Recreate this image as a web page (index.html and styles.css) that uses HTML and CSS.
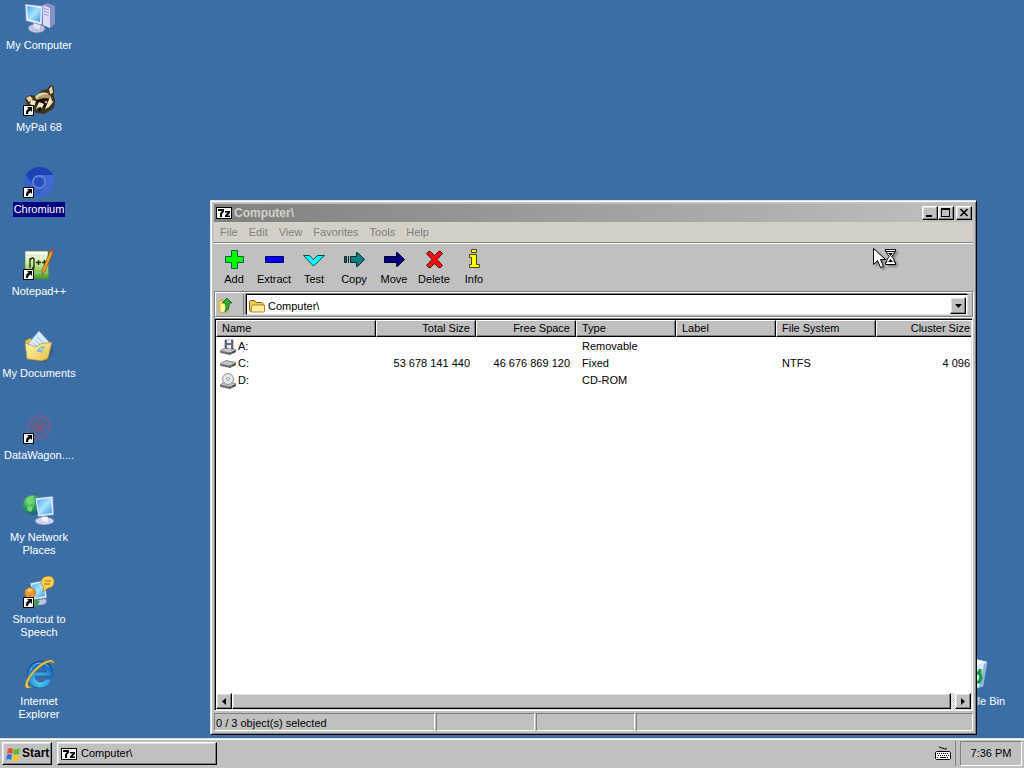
FILE: index.html
```
<!DOCTYPE html>
<html lang="en">
<head>
  <meta charset="UTF-8">
  <meta name="viewport" content="width=device-width, initial-scale=1.0">
  <title>Desktop</title>
  <link rel="stylesheet" href="styles.css">
</head>
<body>
  <!-- Shared icons -->
  <svg class="defs" aria-hidden="true">
    <defs>
      <linearGradient id="screen" x1="0" y1="0" x2="1" y2="1">
        <stop offset="0" stop-color="#4aa8f0"/>
        <stop offset="0.5" stop-color="#a8e4fc"/>
        <stop offset="1" stop-color="#3c94e4"/>
      </linearGradient>
      <linearGradient id="paper" x1="0" y1="0" x2="0" y2="1">
        <stop offset="0.1" stop-color="#fbfff4"/>
        <stop offset="0.55" stop-color="#b8e080"/>
        <stop offset="1" stop-color="#3c9c20"/>
      </linearGradient>
      <linearGradient id="folder" x1="0" y1="0" x2="1" y2="1">
        <stop offset="0" stop-color="#fff6b8"/>
        <stop offset="1" stop-color="#e8c040"/>
      </linearGradient>
      <radialGradient id="globe" cx="0.35" cy="0.3" r="0.8">
        <stop offset="0" stop-color="#90e890"/>
        <stop offset="0.5" stop-color="#28a048"/>
        <stop offset="1" stop-color="#1448a0"/>
      </radialGradient>
      <radialGradient id="ie" cx="0.5" cy="0.75" r="0.75">
        <stop offset="0" stop-color="#58d4f4"/>
        <stop offset="0.6" stop-color="#2888d4"/>
        <stop offset="1" stop-color="#0c50a4"/>
      </radialGradient>
    </defs>
    <symbol id="shortcut" viewBox="0 0 11 11">
      <path fill="#fff" stroke="#000" d="M.5.5h10v10H.5z"/>
      <path d="M4 2h5v5L7.600 5.600Q5 6.500 5 9H3Q2.500 5.500 5.600 3.600z"/>
    </symbol>
    <symbol id="sevenzip" viewBox="0 0 16 12">
      <path d="M0 0h16v12H0z"/>
      <path fill="#fff" d="M1 1h14v10H1z"/>
      <path d="M2 2h6v2.500L6 7v3H4V6.500L6 4H2zM9 4h5v2l-2.500 2.500H14V10H9V8.500L11.500 5.500H9z"/>
    </symbol>
    <symbol id="drive" viewBox="0 0 16 8">
      <path fill="#c8c8c8" stroke="#666" stroke-width=".7" d="M.5 3.500L6 .5l9.500 2v2.500L10 7.600.5 5.500z"/>
      <path fill="#707070" d="M.5 3.800L10 5.600v2L.5 5.700z"/>
      <path fill="#444" d="M10 5.600l5.500-2.500v2L10 7.600z"/>
      <path fill="#60d060" d="M11 5.500h1.500v1H11z"/>
    </symbol>
  </svg>

  <main class="desktop">
    <div class="icons">
      <a class="shortcut" href="#">
        <svg width="32" height="32" viewBox="0 0 32 32">
          <path fill="#8890c8" d="M20 3l5-2 7 3v18l-5 4-7-3z"/>
          <path fill="#dcdcf4" d="M20 3l7 3v20l-7-3z"/>
          <path stroke="#9aa0cc" d="M21 6l5 2M21 9l5 2M21 12l5 2"/>
          <path fill="#c0c4e4" stroke="#7078b0" stroke-width=".6" d="M5 26q1-4 9-4 8 1 8 4.500T14 31q-8-.5-9-5z"/>
          <path fill="#e4e4f8" d="M10 20l7 1v6l-6-1z"/>
          <path fill="#eceef8" stroke="#6670ac" stroke-width=".7" d="M2 2l18 2-1 19-16-4z"/>
          <path fill="url(#screen)" d="M4 4l14 2-1 14-12-3z"/>
        </svg>
        <span>My Computer</span>
      </a>
      <a class="shortcut" href="#">
        <svg width="32" height="32" viewBox="0 0 32 32">
          <path fill="#40341c" d="M2 14l5-3 6 1 6-6 5-1 4-4 3 2v10l2 5-3 7-9 5-8-1-9-8z"/>
          <path fill="#e8d4a8" d="M3 14l4-2 3 3-4 3zM26 5l3-3 1 7-3 1zM12 13q6-7 14-3l-4 2q-5-1-8 4z"/>
          <path fill="#b49868" d="M14 14q6-5 13-3l2 4q-9-3-13 3z"/>
          <path fill="#140e08" d="M13 17q6-5 14-1l-1 6q-5 3-11 1z"/>
          <path fill="#f4e8c8" d="M27 13l3 5-4 5-4 2zM8 16l5 1-2 5-4-2zM16 18l5 2-3 6-5-1z"/>
          <circle cx="23" cy="18" r="1.300" fill="#e0a848"/>
          <path fill="#111" d="M14 24l4-1 1 3-3 2z"/>
          <use href="#shortcut" x="0" y="21" width="11" height="11"/>
        </svg>
        <span>MyPal 68</span>
      </a>
      <a class="shortcut selected" href="#">
        <svg width="32" height="32" viewBox="0 0 32 32">
          <circle cx="16" cy="16" r="15" fill="#3460cc"/>
          <path fill="#1c42b4" d="M3 9Q8 1 16 1q10 0 14 8H16q-6 0-7 8z"/>
          <path fill="#4068d0" d="M16 9h14q4 11-5 19l-9 3 7-12q1-6-7-10z"/>
          <circle cx="16" cy="16" r="7" fill="#6484d8"/>
          <circle cx="16" cy="16" r="5.300" fill="#2450c0"/>
          <use href="#shortcut" x="0" y="21" width="11" height="11"/>
        </svg>
        <span>Chromium</span>
      </a>
      <a class="shortcut" href="#">
        <svg width="32" height="32" viewBox="0 0 32 32">
          <path fill="url(#paper)" stroke="#507850" stroke-width=".6" d="M2 3h23l1 28H2z"/>
          <path stroke="#607060" stroke-width="1.500" stroke-dasharray="1.500 1.500" d="M3 2.500h22"/>
          <path stroke="#b8ccb8" stroke-width=".6" d="M3 7h22M3 21h22M3 25h22"/>
          <path fill="none" stroke="#102808" stroke-width="1.300" d="M7 20V11h1l1-1h1l1 1v9H9M13 14.500h5m-2.500-2.500v5M19 14.500h5m-2.500-2.500v5"/>
          <path fill="#e8a030" stroke="#704010" stroke-width=".6" d="M28 1l3 2-9 20-3 4v-5z"/>
          <path fill="#c05050" d="M28 1l3 2-1 2.500-3-2z"/>
          <use href="#shortcut" x="0" y="21" width="11" height="11"/>
        </svg>
        <span>Notepad++</span>
      </a>
      <a class="shortcut" href="#">
        <svg width="32" height="32" viewBox="0 0 32 32">
          <path fill="#324c70" opacity=".5" d="M5 30l18 2 7-9v-8l-5 14z"/>
          <path fill="#e8c048" stroke="#907020" stroke-width=".6" d="M2 11l5-3 6 4 12 2-1 16-20-1z"/>
          <path fill="#d8ecff" stroke="#78a8e0" stroke-width=".7" d="M5 14L16 1l11 12-9 12z"/>
          <path stroke="#90bcf0" d="M12 10l9 8M14 7l9 8M10 13l8 7"/>
          <path fill="url(#folder)" stroke="#a08028" stroke-width=".6" d="M2 13l11 4 4-3 12-2-4 16-6 3-15-2z"/>
          <path fill="none" stroke="#78bcd8" stroke-width="1.300" d="M14 22q3-6 7-5-2 4-6 4l5 1"/>
        </svg>
        <span>My Documents</span>
      </a>
      <a class="shortcut" href="#">
        <svg width="32" height="32" viewBox="0 0 32 32" opacity=".8">
          <g fill="none" stroke="#865c8c">
            <circle cx="16" cy="15" r="11" stroke-width="2.500" stroke-dasharray="3 1"/>
            <circle cx="16" cy="15" r="5" stroke="#94506c" stroke-width="2"/>
            <path stroke="#945070" d="M16 3v24M4 15h24M8 7l16 16M24 7L8 23"/>
          </g>
        </svg>
        <svg class="overlay" width="11" height="11"><use href="#shortcut" width="11" height="11"/></svg>
        <span>DataWagon....</span>
      </a>
      <a class="shortcut" href="#">
        <svg width="32" height="32" viewBox="0 0 32 32">
          <circle cx="10" cy="11" r="10" fill="url(#globe)"/>
          <path fill="#70d870" d="M3 5q4-4 8-3l-2 5-4 3zM5 12l5 1-2 5-4-2z"/>
          <path fill="#d0d4ec" stroke="#7078b0" stroke-width=".6" d="M12 27q1-4 10-4 9 1 9 4t-10 4q-8-.5-9-4z"/>
          <path fill="#f0f0fc" d="M18 21l7 2v5l-6-1z"/>
          <path fill="#e0e8fa" stroke="#5068ac" stroke-width=".7" d="M12 4l18-2 1 19-16 2z"/>
          <path fill="url(#screen)" d="M14 6l14-2 1 15-13 2z"/>
        </svg>
        <span>My Network Places</span>
      </a>
      <a class="shortcut" href="#">
        <svg width="32" height="32" viewBox="0 0 32 32">
          <path fill="#c8c4e8" stroke="#686898" stroke-width=".6" d="M12 26q4-4 11-3 2 3-1 5t-10 1z"/>
          <path fill="#dceaf8" stroke="#486898" stroke-width=".7" d="M7 7l15-3 2 18-13 2z"/>
          <path fill="url(#screen)" d="M9 9l11-3 2 14-10 2z"/>
          <path fill="#3c9c50" d="M10 23l7 2-3 5H6z"/>
          <circle cx="7" cy="17" r="5.500" fill="#e89838" stroke="#905010" stroke-width=".6"/>
          <path fill="#f8c868" d="M3 15q3-5 7-1l-3 2z"/>
          <path fill="#fcd050" stroke="#a87818" stroke-width=".7" d="M18 6q1-6 8-6 6 1 5 7-1 5-6 5l-5 4 1-5q-3-2-3-5z"/>
          <path stroke="#a07010" d="M22 5h6M21 8h6"/>
          <use href="#shortcut" x="0" y="21" width="11" height="11"/>
        </svg>
        <span>Shortcut to Speech</span>
      </a>
      <a class="shortcut" href="#">
        <svg width="32" height="32" viewBox="0 0 32 32">
          <path fill="url(#ie)" stroke="#0c4488" stroke-width=".5" fill-rule="evenodd" d="M17 3q12 0 13 12l-.5 3H12q1 6 6 6 3 0 5-3h6q-3 9-12 9Q4 29 4 16.500 5 4 17 3zM12 14h11q-1-5-5.500-5T12 14z"/>
          <path fill="none" stroke="#90dcf8" stroke-width=".8" d="M7 13q3-8 10-8 6 0 9 4"/>
          <path fill="#ecc040" stroke="#a88020" stroke-width=".3" d="M31 7q1-5-4-5-8 1-15 9Q3 20 2 27q0 5 7 2-5 0-4-4 2-7 9-13 7-7 13-8 4 0 4 3z"/>
        </svg>
        <span>Internet Explorer</span>
      </a>
    </div>

    <a class="shortcut recycle" href="#">
      <svg width="32" height="32" viewBox="0 0 32 32">
        <path fill="#d4ecf4" stroke="#7cacc8" stroke-width=".7" d="M3 4l12-3 12 3-4 24-8 3-8-4z"/>
        <path fill="#f4fcff" d="M3 4l12-3 12 3-10 3z"/>
        <path fill="#8cb8d8" d="M24 6l3-2-4 23-4 2z"/>
        <path fill="none" stroke="#18983c" stroke-width="3" d="M12 20l4-6 4 2 1 4-2 4h-6M20 11v4h-4"/>
      </svg>
      <span>Recycle Bin</span>
    </a>

    <section class="window">
      <header class="titlebar">
        <svg width="16" height="12"><use href="#sevenzip"/></svg>
        <h1>Computer\</h1>
        <button class="winbtn" aria-label="Minimize"><svg width="12" height="10"><path d="M2 7h6v2H2z"/></svg></button>
        <button class="winbtn" aria-label="Maximize"><svg width="12" height="10"><path d="M1 0h9v9H1zM2 2v6h7V2z" fill-rule="evenodd"/></svg></button>
        <button class="winbtn close" aria-label="Close"><svg width="12" height="10"><path fill="none" stroke="#000" stroke-width="1.600" d="M2.500 1l7 7M9.500 1l-7 7"/></svg></button>
      </header>

      <nav class="menu">
        <button>File</button>
        <button>Edit</button>
        <button>View</button>
        <button>Favorites</button>
        <button>Tools</button>
        <button>Help</button>
      </nav>

      <div class="toolbar">
        <button>
          <svg width="24" height="24"><path fill="#0f0" stroke="#063" d="M9.500 3.500h6v6h6v6h-6v6h-6v-6h-6v-6h6z"/></svg>
          Add
        </button>
        <button>
          <svg width="24" height="24"><path fill="#00f" stroke="#000060" d="M3.500 9.500h18v6h-18z"/></svg>
          Extract
        </button>
        <button>
          <svg width="24" height="24"><path fill="#0ff" stroke="#064848" d="M1.500 8.500h6l4 4 4-4h7L11.500 19z"/></svg>
          Test
        </button>
        <button>
          <svg width="24" height="24"><path fill="#088080" stroke="#022" d="M2.500 9.500h2v6h-2zM8.500 9.500h6v-4h1l7 7-7 7h-1v-4h-6z"/><path stroke="#022" d="M6.500 9v7"/></svg>
          Copy
        </button>
        <button>
          <svg width="24" height="24"><path fill="#000080" stroke="#000030" d="M2.500 9.500h12v-4h1l7 7-7 7h-1v-4h-12z"/></svg>
          Move
        </button>
        <button>
          <svg width="24" height="24"><path fill="#f01010" stroke="#500" d="M4.500 6.500l2-2h2l4 4 4-4h2l2 2-5.500 6 5.500 6-2 2h-2l-4-4-4 4h-2l-2-2 5.500-6z"/></svg>
          Delete
        </button>
        <button>
          <svg width="24" height="24"><path fill="#ff0" stroke="#440" d="M9.500 2.500h5v3h-5zM7.500 7.500h7v10h3v3h-10v-3h2v-7h-2z"/></svg>
          Info
        </button>
      </div>

      <div class="address">
        <button class="up" aria-label="Up one level">
          <svg width="16" height="16">
            <path fill="#f4e060" stroke="#b09828" stroke-width=".7" d="M1 4l4-1 2 2h3v10l-7 .5-2-2z"/>
            <path fill="#fff8a0" d="M3 7l6-1-1 8-5 1z"/>
            <path fill="#28b030" stroke="#085010" stroke-width=".7" d="M4 6l5-5 5 5h-3q1 6-4 9 2-5 0-9z"/>
          </svg>
        </button>
        <div class="combo">
          <svg width="16" height="14">
            <path fill="#f0d050" stroke="#806010" d="M.5 11V2.500l1-1h4l1.500 2h6l1 1v7l-1 1H1.500z"/>
            <path fill="#fff098" stroke="#907020" stroke-width=".8" d="M2 13l1-7h12.500v6.500l-1 .5z"/>
          </svg>
          <input type="text" aria-label="Path" value="Computer\">
          <button class="drop" aria-label="Show folders"><svg width="7" height="4"><path d="M0 0h7L3.500 4z"/></svg></button>
        </div>
      </div>

      <div class="list">
        <div class="rows">
          <table>
            <thead>
              <tr>
                <th class="name">Name</th>
                <th class="num">Total Size</th>
                <th class="num">Free Space</th>
                <th>Type</th>
                <th>Label</th>
                <th>File System</th>
                <th class="num">Cluster Size</th>
              </tr>
            </thead>
            <tbody>
              <tr>
                <td class="name"><svg width="16" height="16"><use href="#drive" y="8" width="16" height="8"/><path fill="#687080" stroke="#404858" stroke-width=".6" d="M5 1h8v9l-8-1z"/><path fill="#e8ecf4" d="M7 1h4v3H7zM7 6h4v4L7 9z"/></svg>A:</td>
                <td></td><td></td><td>Removable</td><td></td><td></td><td></td>
              </tr>
              <tr>
                <td class="name"><svg width="16" height="16"><use href="#drive" y="4" width="16" height="8"/></svg>C:</td>
                <td class="num">53 678 141 440</td><td class="num">46 676 869 120</td><td>Fixed</td><td></td><td>NTFS</td><td class="num">4 096</td>
              </tr>
              <tr>
                <td class="name"><svg width="16" height="16"><use href="#drive" y="8" width="16" height="8"/><circle cx="8" cy="6" r="5.500" fill="#e4e8ec" stroke="#777" stroke-width=".8"/><circle cx="8" cy="6" r="1.500" fill="#fff" stroke="#777" stroke-width=".7"/></svg>D:</td>
                <td></td><td></td><td>CD-ROM</td><td></td><td></td><td></td>
              </tr>
            </tbody>
          </table>
        </div>
        <div class="scrollbar">
          <button aria-label="Scroll left"><svg width="4" height="7"><path d="M4 0v7L0 3.500z"/></svg></button>
          <div class="thumb"></div>
          <button aria-label="Scroll right"><svg width="4" height="7"><path d="M0 0v7l4-3.500z"/></svg></button>
        </div>
      </div>

      <footer class="status">
        <div class="first">0 / 3 object(s) selected</div>
        <div></div>
        <div></div>
        <div class="last"></div>
      </footer>
    </section>

    <!-- Busy pointer -->
    <svg class="pointer" width="26" height="23">
      <path fill="#fff" stroke="#000" d="M1.500 1.500v16l4-4 3 7 3-1-3-7h5z"/>
      <path fill="#fff" stroke="#000" d="M13.500 2.500h10v2h-1q0 3-3 5 3 2 3 6h1v2h-10v-2h1q0-4 3-6-3-2-3-5h-1z"/>
      <path d="M16 6h5l-2.500 3zM16 15l2.500-3 2.500 3zM14 4h9v1h-9z"/>
    </svg>
  </main>

  <footer class="taskbar">
    <button class="start">
      <svg width="16" height="16">
        <path fill="#e85020" d="M3 3q3-2 5 0L7 8Q4 6 2 8z"/>
        <path fill="#60b830" d="M9 3q3 1 6-1l-1 6q-3 1-6 0z"/>
        <path fill="#3870e0" d="M2 9q2-2 5 0l-1 5q-3-2-5 0z"/>
        <path fill="#f8c818" d="M8 9q3 1 6 0l-1 5q-3 2-6 0z"/>
      </svg>
      Start
    </button>
    <button class="task"><svg width="16" height="12"><use href="#sevenzip"/></svg>Computer\</button>
    <div class="tray">
      <svg width="16" height="14">
        <path fill="none" stroke="#000" d="M4 1h1l1 1h2l1 1h2l1-1M2.500 5.500h12l1 1v6l-1 1h-13l-1-1v-6l1-1z"/>
        <path fill="#fff" d="M1 6h14v7H1z"/>
        <path stroke="#000" stroke-dasharray="1 1" d="M2 7.500h12M3 9.500h11M2 11.500h2M12 11.500h2"/>
        <path stroke="#000" d="M5 11.500h6"/>
      </svg>
      <time>7:36 PM</time>
    </div>
  </footer>
</body>
</html>
```
FILE: styles.css
```
* {
  box-sizing: border-box;
}

body {
  margin: 0;
  height: 100vh;
  display: flex;
  flex-direction: column;
  overflow: hidden;
  background: #3a6ea5;
  color: #000;
  font: 11px/13px "Liberation Sans", Arial, sans-serif;
  cursor: default;
}

button, input {
  margin: 0;
  padding: 0;
  border: 0;
  background: none;
  color: inherit;
  font: inherit;
}

svg {
  display: block;
  flex: none;
}

.defs {
  position: absolute;
  width: 0;
  height: 0;
}

/* Desktop */
.desktop {
  position: relative;
  flex: 1;
  min-height: 0;
}

.icons {
  display: flex;
  flex-direction: column;
  width: 78px;
  padding-top: 2px;
}

.shortcut {
  position: relative;
  display: flex;
  flex-direction: column;
  align-items: center;
  gap: 4px;
  width: 78px;
  height: 82px;
  color: #fff;
  text-align: center;
  text-decoration: none;
}

.shortcut span {
  padding: 1px;
}

.shortcut.selected span {
  background: #000080;
}

.overlay {
  position: absolute;
  left: 23px;
  top: 21px;
}

.recycle {
  position: absolute;
  right: 9px;
  bottom: -2px;
}

/* Window */
.window {
  position: absolute;
  left: 210px;
  right: 47px;
  top: 200px;
  bottom: 3px;
  display: flex;
  flex-direction: column;
  padding: 3px;
  background: #c0c0c0;
  border: 1px solid;
  border-color: #dfdfdf #000 #000 #dfdfdf;
  box-shadow: inset 1px 1px #fff, inset -1px -1px #808080;
}

.titlebar {
  display: flex;
  align-items: center;
  height: 18px;
  padding: 0 1px 0 2px;
  background: linear-gradient(to right, #808080, #c0c0c0);
}

.titlebar h1 {
  flex: 1;
  margin: 0;
  padding-left: 2px;
  color: #d4d0c8;
  font-size: 12px;
  line-height: 14px;
}

.winbtn, .drop, .scrollbar button, .thumb, .start, .task {
  background: #c0c0c0;
  border: 1px solid;
  border-color: #fff #000 #000 #fff;
  box-shadow: inset -1px -1px #808080, inset 1px 1px #dfdfdf;
}

.winbtn {
  width: 16px;
  height: 14px;
  padding: 1px;
}

.winbtn.close {
  margin-left: 2px;
}

.menu {
  display: flex;
  gap: 1px;
  height: 20px;
  padding-left: 1px;
  background: #d4d0c8;
}

.menu button {
  padding: 0 5px;
  color: #808080;
}

.toolbar {
  display: flex;
  height: 49px;
  padding-top: 4px;
  border-top: 1px solid #808080;
  box-shadow: inset 0 1px #fff;
}

.toolbar button {
  display: flex;
  flex-direction: column;
  align-items: center;
  width: 40px;
  height: 39px;
  gap: 2px;
}

.address {
  display: flex;
  height: 26px;
  margin-bottom: 1px;
  padding: 2px 4px 1px 3px;
  border: 1px solid #808080;
  box-shadow: inset 1px 1px #fff, 1px 1px #fff;
}

.up {
  display: flex;
  align-items: center;
  width: 26px;
  margin-right: 2px;
  border-right: 1px solid #808080;
}

.combo {
  display: flex;
  align-items: center;
  flex: 1;
  padding: 2px 1px 0 2px;
  background: #fff;
  border: 1px solid;
  border-color: #000 #dfdfdf #dfdfdf #000;
  box-shadow: -1px -1px #808080;
}

.combo input {
  flex: 1;
  min-width: 0;
  padding: 1px 0 0 3px;
  outline: 0;
}

.drop {
  display: flex;
  align-items: center;
  justify-content: center;
  width: 16px;
  height: 17px;
}

/* File list */
.list {
  display: flex;
  flex-direction: column;
  flex: 1;
  min-height: 0;
  padding: 1px;
  background: #fff;
  border: 1px solid;
  border-color: #808080 #fff #fff #808080;
  box-shadow: inset 1px 1px #000, inset -1px -1px #dfdfdf;
}

.rows {
  flex: 1;
  overflow: hidden;
}

table {
  width: 760px;
  table-layout: fixed;
  border-collapse: separate;
  border-spacing: 0;
}

th, td {
  width: 100px;
  height: 17px;
  padding: 2px 6px 0;
  font-weight: normal;
  text-align: left;
  white-space: nowrap;
}

th {
  padding: 0 5px;
  background: #c0c0c0;
  border: 1px solid;
  border-color: #fff #000 #000 #fff;
  box-shadow: inset -1px -1px #808080;
}

.name {
  width: 160px;
}

td.name {
  display: flex;
  align-items: center;
  gap: 2px;
  padding-left: 4px;
}

.num {
  text-align: right;
}

.scrollbar {
  display: flex;
  height: 16px;
  background: repeating-conic-gradient(#fff 0 25%, #c0c0c0 0 50%) 0 0 / 2px 2px;
}

.scrollbar button {
  display: flex;
  align-items: center;
  justify-content: center;
  width: 16px;
}

.thumb {
  flex: 1;
  margin-right: 4px;
}

/* Status bar */
.status {
  display: flex;
  gap: 1px;
  height: 20px;
  padding-top: 2px;
}

.status div {
  width: 99px;
  padding: 3px 1px 0;
  border: 1px solid;
  border-color: #808080 #fff #fff #808080;
}

.status .first {
  width: 221px;
}

.status .last {
  flex: 1;
}

/* Mouse pointer */
.pointer {
  position: absolute;
  left: 872px;
  top: 247px;
  filter: drop-shadow(2px 2px 1px rgba(0, 0, 0, 0.3));
}

/* Taskbar */
.taskbar {
  display: flex;
  height: 30px;
  padding: 2px 2px 3px;
  background: #c0c0c0;
  border-top: 1px solid #dfdfdf;
  box-shadow: inset 0 1px #fff;
}

.start, .task {
  display: flex;
  align-items: center;
  height: 23px;
  margin-top: 1px;
  padding: 0 2px;
}

.start {
  width: 50px;
  margin-right: 5px;
  gap: 1px;
  font-size: 12px;
  font-weight: bold;
}

.task {
  width: 160px;
  padding-left: 3px;
  gap: 4px;
}

.tray {
  display: flex;
  align-items: center;
  margin-left: auto;
}

.tray time {
  display: flex;
  align-items: center;
  justify-content: center;
  width: 62px;
  height: 25px;
  margin-left: 9px;
  border: 1px solid;
  border-color: #808080 #fff #fff #808080;
  box-shadow: -4px 0 #c0c0c0, -5px 0 #808080;
}
```
